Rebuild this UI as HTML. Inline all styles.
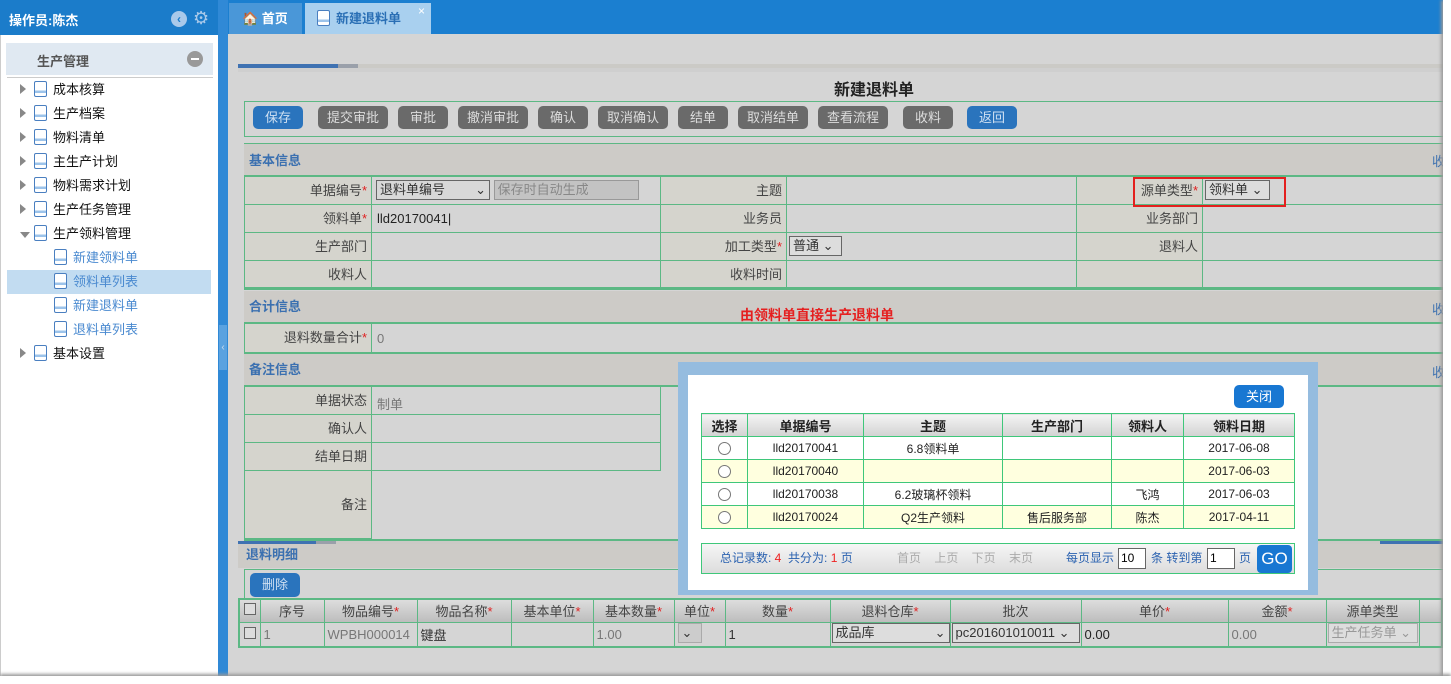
<!DOCTYPE html>
<html><head><meta charset="utf-8"><style>
*{margin:0;padding:0;box-sizing:border-box}
body{width:1451px;height:684px;overflow:hidden;background:#fff;font-family:"Liberation Sans","Noto Sans CJK SC",sans-serif;font-size:13px;color:#333;position:relative}
.a{position:absolute}
.btn{position:absolute;top:106px;height:23px;border-radius:5px;background:#6a6a6a;color:#ddd;font-size:13px;line-height:23px;text-align:center}
.blue{background:#2a74bd;color:#cfe0f2}
.g{border:1px solid #5cb884}
.sh{background:#cdcbc7;color:#3b70b0;font-weight:bold;padding-left:5px}
.cell{position:absolute;border-right:1px solid #5cb884;border-bottom:1px solid #5cb884;line-height:27px;font-size:13px}
.lab{background:#d5d4cd;text-align:right;padding-right:4px;color:#444}
.req{color:#e02020}
.tree div{position:absolute;left:0;height:24px;line-height:24px;font-size:13px;color:#111}
.doc{display:inline-block;width:13px;height:16px;border:1px solid #4a7fc0;border-radius:2px;background:linear-gradient(#fff 60%,#9cc3ea 60%,#9cc3ea 80%,#fff 80%);vertical-align:-3px;margin-right:6px}
.tri{display:inline-block;width:0;height:0;border-left:6px solid #888;border-top:5px solid transparent;border-bottom:5px solid transparent;margin:0 8px 0 0}
.sel{display:inline-block;border:1px solid #666;background:#ddd;height:20px;line-height:18px;padding:0 3px;font-size:13px;color:#333;white-space:nowrap;overflow:hidden}
table{border-collapse:collapse}
.mt td,.mt th{border:1px solid #3fc77a;text-align:center;font-size:12px;height:23px;color:#222}
.mt th{background:linear-gradient(#f4f4f4,#d2d2d2);font-weight:bold;font-size:13px}
.rad{display:inline-block;width:13px;height:13px;border:1px solid #777;border-radius:50%;background:#fff;vertical-align:middle}
.dt{table-layout:fixed}
.dt td{border:1px solid #5cb884;font-size:13px;height:23px;padding-left:3px;color:#777;white-space:nowrap;overflow:hidden}
.dt th{border:1px solid #5cb884;font-weight:normal;font-size:13px;height:23px;background:linear-gradient(#ddd,#bdbdbd);color:#444;white-space:nowrap;overflow:hidden}
</style></head><body>
<!-- sidebar -->
<div class="a" style="left:0;top:0;width:218px;height:35px;background:#1b7cca"></div>
<div class="a" style="left:9px;top:10px;color:#fff;font-weight:bold;font-size:13px">操作员:陈杰</div>
<div class="a" style="left:171px;top:11px;width:16px;height:16px;border-radius:50%;background:#a9c9ea;color:#1b7cca;font-size:12px;line-height:16px;text-align:center;font-weight:bold">&lsaquo;</div>
<div class="a" style="left:193px;top:9px;color:#a9c9ea;font-size:18px;line-height:18px">⚙</div>
<div class="a" style="left:0;top:35px;width:218px;height:641px;background:#fff;border-left:1px solid #ccc"></div>
<div class="a" style="left:6px;top:43px;width:207px;height:32px;background:#e0e9f2"></div>
<div class="a" style="left:37px;top:51px;font-size:13px;color:#555;font-weight:bold">生产管理</div>
<div class="a" style="left:187px;top:51px;width:16px;height:16px;border-radius:50%;background:#999"><div class="a" style="left:4px;top:7px;width:8px;height:2px;background:#fff"></div></div>
<div class="a" style="left:7px;top:77px;width:206px;height:1px;background:#ccc"></div>
<div class="a" style="left:7px;top:270px;width:204px;height:24px;background:#c2dcf1"></div>
<div class="a tree" style="left:20px;top:78px;width:190px">
<div style="top:0"><span class="tri"></span><span class="doc"></span>成本核算</div>
<div style="top:24px"><span class="tri"></span><span class="doc"></span>生产档案</div>
<div style="top:48px"><span class="tri"></span><span class="doc"></span>物料清单</div>
<div style="top:72px"><span class="tri"></span><span class="doc"></span>主生产计划</div>
<div style="top:96px"><span class="tri"></span><span class="doc"></span>物料需求计划</div>
<div style="top:120px"><span class="tri"></span><span class="doc"></span>生产任务管理</div>
<div style="top:144px"><span class="tri" style="border-left:5px solid transparent;border-right:5px solid transparent;border-top:6px solid #888;border-bottom:0;vertical-align:middle;margin-right:4px"></span><span class="doc"></span>生产领料管理</div>
<div style="top:168px;left:34px;color:#4a8ad0"><span class="doc"></span>新建领料单</div>
<div style="top:192px;left:34px;color:#4a8ad0"><span class="doc"></span>领料单列表</div>
<div style="top:216px;left:34px;color:#4a8ad0"><span class="doc"></span>新建退料单</div>
<div style="top:240px;left:34px;color:#4a8ad0"><span class="doc"></span>退料单列表</div>
<div style="top:264px"><span class="tri"></span><span class="doc"></span>基本设置</div>
</div>
<div class="a" style="left:218px;top:0;width:10px;height:676px;background:#3089d6"></div>
<div class="a" style="left:219px;top:325px;width:8px;height:45px;background:#5aa2e0;color:#cde;font-size:10px;line-height:45px;text-align:center">‹</div>
<!-- tabs -->
<div class="a" style="left:228px;top:0;width:1215px;height:34px;background:#1b7fd0"></div>
<div class="a" style="left:229px;top:3px;width:73px;height:31px;background:#4a97d8;color:#fff;font-weight:bold;line-height:31px;padding-left:13px">🏠 首页</div>
<div class="a" style="left:305px;top:3px;width:126px;height:31px;background:#a9d0ef;color:#2a6fb5;font-weight:bold;line-height:31px;padding-left:12px"><span class="doc" style="margin-right:6px"></span>新建退料单</div>
<div class="a" style="left:418px;top:4px;color:#fff;font-size:12px">×</div>
<!-- main -->
<div class="a" style="left:228px;top:34px;width:1215px;height:642px;background:#d5d5d5"></div>
<div class="a" style="left:238px;top:64px;width:1205px;height:4px;background:#cbcac6"></div>
<div class="a" style="left:238px;top:64px;width:100px;height:4px;background:#3f72b2"></div>
<div class="a" style="left:338px;top:64px;width:20px;height:4px;background:#9aa0aa"></div>
<div class="a" style="left:238px;top:68px;width:1205px;height:4px;background:#cfcfcf"></div>
<div class="a" style="left:834px;top:76px;font-size:16px;font-weight:bold;color:#222">新建退料单</div>
<div class="a g" style="left:244px;top:101px;width:1199px;height:36px;border-right:0"></div>
<div class="btn blue" style="left:253px;width:50px">保存</div>
<div class="btn" style="left:318px;width:70px">提交审批</div>
<div class="btn" style="left:398px;width:50px">审批</div>
<div class="btn" style="left:458px;width:70px">撤消审批</div>
<div class="btn" style="left:538px;width:50px">确认</div>
<div class="btn" style="left:598px;width:70px">取消确认</div>
<div class="btn" style="left:678px;width:50px">结单</div>
<div class="btn" style="left:738px;width:70px">取消结单</div>
<div class="btn" style="left:818px;width:70px">查看流程</div>
<div class="btn" style="left:903px;width:50px">收料</div>
<div class="btn blue" style="left:967px;width:50px">返回</div>
<!-- basic info -->
<div class="a sh" style="left:244px;top:143px;width:1199px;height:34px;line-height:34px;border-top:1px solid #5cb884;border-bottom:2px solid #5cb884">基本信息</div>
<div class="a" style="left:1432px;top:151px;color:#3b70b0">收</div>
<div class="a" style="left:244px;top:177px;width:1199px;height:113px;border-left:1px solid #5cb884;border-bottom:2px solid #5cb884">
<div class="cell lab" style="left:0;top:0;width:127px;height:28px">单据编号<span class="req">*</span></div>
<div class="cell" style="left:127px;top:0;width:289px;height:28px;padding:3px 4px"><span class="sel" style="width:114px;background:#d8d8d8">退料单编号 <span style="float:right">⌄</span></span> <span class="sel" style="width:145px;background:#c3c3c3;color:#888;border-color:#999">保存时自动生成</span></div>
<div class="cell lab" style="left:416px;top:0;width:126px;height:28px">主题</div>
<div class="cell" style="left:542px;top:0;width:290px;height:28px"></div>
<div class="cell lab" style="left:832px;top:0;width:126px;height:28px">源单类型<span class="req">*</span></div>
<div class="cell" style="left:958px;top:0;width:241px;height:28px;padding:3px 2px"><span class="sel" style="width:65px">领料单 ⌄</span></div>
<div class="cell lab" style="left:0;top:28px;width:127px;height:28px">领料单<span class="req">*</span></div>
<div class="cell" style="left:127px;top:28px;width:289px;height:28px;padding-left:5px;color:#222">lld20170041|</div>
<div class="cell lab" style="left:416px;top:28px;width:126px;height:28px">业务员</div>
<div class="cell" style="left:542px;top:28px;width:290px;height:28px"></div>
<div class="cell lab" style="left:832px;top:28px;width:126px;height:28px">业务部门</div>
<div class="cell" style="left:958px;top:28px;width:241px;height:28px"></div>
<div class="cell lab" style="left:0;top:56px;width:127px;height:28px">生产部门</div>
<div class="cell" style="left:127px;top:56px;width:289px;height:28px"></div>
<div class="cell lab" style="left:416px;top:56px;width:126px;height:28px">加工类型<span class="req">*</span></div>
<div class="cell" style="left:542px;top:56px;width:290px;height:28px;padding:3px 2px"><span class="sel" style="width:53px">普通 ⌄</span></div>
<div class="cell lab" style="left:832px;top:56px;width:126px;height:28px">退料人</div>
<div class="cell" style="left:958px;top:56px;width:241px;height:28px"></div>
<div class="cell lab" style="left:0;top:84px;width:127px;height:27px">收料人</div>
<div class="cell" style="left:127px;top:84px;width:289px;height:27px"></div>
<div class="cell lab" style="left:416px;top:84px;width:126px;height:27px">收料时间</div>
<div class="cell" style="left:542px;top:84px;width:290px;height:27px"></div>
<div class="cell lab" style="left:832px;top:84px;width:126px;height:27px"></div>
<div class="cell" style="left:958px;top:84px;width:241px;height:27px"></div>
</div>
<div class="a" style="left:1133px;top:177px;width:153px;height:30px;border:2px solid #e3201e"></div>
<!-- 合计 -->
<div class="a sh" style="left:244px;top:291px;width:1199px;height:33px;line-height:32px;border-bottom:2px solid #5cb884">合计信息</div>
<div class="a" style="left:740px;top:305px;color:#e52020;font-weight:bold;font-size:14px">由领料单直接生产退料单</div>
<div class="a" style="left:1432px;top:299px;color:#3b70b0">收</div>
<div class="a" style="left:244px;top:324px;width:1199px;height:30px;border-left:1px solid #5cb884;border-bottom:2px solid #5cb884">
<div class="cell lab" style="left:0;top:0;width:127px;height:28px;border-bottom:0">退料数量合计<span class="req">*</span></div>
<div class="a" style="left:132px;top:7px;color:#777">0</div>
</div>
<!-- 备注 -->
<div class="a sh" style="left:244px;top:354px;width:1199px;height:33px;line-height:32px;border-bottom:2px solid #5cb884">备注信息</div>
<div class="a" style="left:1432px;top:362px;color:#3b70b0">收</div>
<div class="a" style="left:244px;top:387px;width:1199px;height:154px;border-left:1px solid #5cb884;border-bottom:2px solid #5cb884">
<div class="cell lab" style="left:0;top:0;width:127px;height:28px">单据状态</div>
<div class="a" style="left:132px;top:7px;color:#777">制单</div>
<div class="cell" style="left:127px;top:0;width:289px;height:28px"></div>
<div class="cell lab" style="left:0;top:28px;width:127px;height:28px">确认人</div>
<div class="cell" style="left:127px;top:28px;width:289px;height:28px"></div>
<div class="cell lab" style="left:0;top:56px;width:127px;height:28px">结单日期</div>
<div class="cell" style="left:127px;top:56px;width:289px;height:28px"></div>
<div class="cell lab" style="left:0;top:84px;width:127px;height:68px;line-height:68px">备注</div>
</div>
<div class="a" style="left:238px;top:541px;width:1205px;height:3px;background:#cbcac6"></div>
<div class="a" style="left:238px;top:541px;width:78px;height:3px;background:#3f72b2"></div>
<div class="a" style="left:316px;top:541px;width:20px;height:3px;background:#9aa0aa"></div>
<div class="a" style="left:1380px;top:541px;width:63px;height:3px;background:#3f72b2"></div>
<!-- 明细 -->
<div class="a sh" style="left:238px;top:544px;width:1205px;height:24px;line-height:22px;padding-left:8px">退料明细</div>
<div class="a g" style="left:244px;top:569px;width:1199px;height:30px;border-right:0;border-bottom:0"></div>
<div class="a" style="left:250px;top:573px;width:50px;height:24px;border-radius:5px;background:#2a74bd;color:#cfe0f2;line-height:24px;text-align:center">删除</div>
<table class="a dt" style="left:238px;top:598px;width:1203px;border:2px solid #5cb884">
<colgroup><col style="width:21px"><col style="width:64px"><col style="width:93px"><col style="width:94px"><col style="width:82px"><col style="width:81px"><col style="width:51px"><col style="width:105px"><col style="width:120px"><col style="width:131px"><col style="width:147px"><col style="width:98px"><col style="width:93px"><col style="width:23px"></colgroup>
<tr><th><span style="display:inline-block;width:12px;height:12px;border:1px solid #666;background:#ddd"></span></th><th>序号</th><th>物品编号<span class="req">*</span></th><th>物品名称<span class="req">*</span></th><th>基本单位<span class="req">*</span></th><th>基本数量<span class="req">*</span></th><th>单位<span class="req">*</span></th><th>数量<span class="req">*</span></th><th>退料仓库<span class="req">*</span></th><th>批次</th><th>单价<span class="req">*</span></th><th>金额<span class="req">*</span></th><th>源单类型</th><th></th></tr>
<tr><td style="text-align:center;padding:0"><span style="display:inline-block;width:12px;height:12px;border:1px solid #666;background:#ddd"></span></td><td>1</td><td>WPBH000014</td><td style="color:#333">键盘</td><td></td><td>1.00</td><td><span class="sel" style="width:24px;background:#ccc;border-color:#aaa">⌄</span></td><td style="color:#333">1</td><td style="padding-left:1px"><span class="sel" style="width:118px">成品库<span style="float:right">⌄</span></span></td><td style="padding-left:1px"><span class="sel" style="width:128px">pc201601010011 ⌄</span></td><td style="color:#222">0.00</td><td>0.00</td><td style="padding-left:1px"><span class="sel" style="width:90px;color:#999;border-color:#aaa">生产任务单 ⌄</span></td><td></td></tr>
</table>
<!-- modal -->
<div class="a" style="left:678px;top:362px;width:640px;height:233px;background:#95bcdf"></div>
<div class="a" style="left:688px;top:375px;width:620px;height:215px;background:#fff"></div>
<div class="a" style="left:1234px;top:385px;width:50px;height:23px;border-radius:5px;background:#1877d2;color:#fff;line-height:23px;text-align:center">关闭</div>
<table class="a mt" style="left:701px;top:413px;width:594px">
<tr><th style="width:46px">选择</th><th style="width:116px">单据编号</th><th style="width:139px">主题</th><th style="width:109px">生产部门</th><th style="width:72px">领料人</th><th>领料日期</th></tr>
<tr><td><span class="rad"></span></td><td>lld20170041</td><td>6.8领料单</td><td></td><td></td><td>2017-06-08</td></tr>
<tr style="background:#ffffdf"><td><span class="rad"></span></td><td>lld20170040</td><td></td><td></td><td></td><td>2017-06-03</td></tr>
<tr><td><span class="rad"></span></td><td>lld20170038</td><td>6.2玻璃杯领料</td><td></td><td>飞鸿</td><td>2017-06-03</td></tr>
<tr style="background:#ffffdf"><td><span class="rad"></span></td><td>lld20170024</td><td>Q2生产领料</td><td>售后服务部</td><td>陈杰</td><td>2017-04-11</td></tr>
</table>
<div class="a" style="left:701px;top:543px;width:594px;height:31px;border:1px solid #3fc77a;background:linear-gradient(#f6f6f6,#dcdcdc);font-size:12px;line-height:29px;color:#2b62b0">
<span class="a" style="left:18px">总记录数: <b style="color:#e22;font-weight:normal">4</b> &nbsp;共分为: <span style="color:#e22">1</span> 页</span>
<span class="a" style="left:195px;color:#aaa">首页 &nbsp; &nbsp;上页 &nbsp; &nbsp;下页 &nbsp; &nbsp;末页</span>
<span class="a" style="left:364px">每页显示</span>
<span class="a" style="left:416px;top:4px;width:28px;height:21px;border:1px solid #666;background:#fff;color:#000;line-height:19px;padding-left:2px">10</span>
<span class="a" style="left:449px">条 转到第</span>
<span class="a" style="left:505px;top:4px;width:28px;height:21px;border:1px solid #666;background:#fff;color:#000;line-height:19px;padding-left:2px">1</span>
<span class="a" style="left:537px">页</span>
<span class="a" style="left:555px;top:1px;width:35px;height:28px;background:#1877d2;color:#fff;border-radius:4px;text-align:center;font-size:17px;line-height:28px">GO</span>
</div>
<!-- outer frame -->
<div class="a" style="left:1443px;top:0;width:8px;height:684px;background:#fff;box-shadow:-2px 0 3px #999"></div>
<div class="a" style="left:0;top:676px;width:1451px;height:8px;background:#fff;box-shadow:0 -2px 3px #999"></div>
</body></html>
